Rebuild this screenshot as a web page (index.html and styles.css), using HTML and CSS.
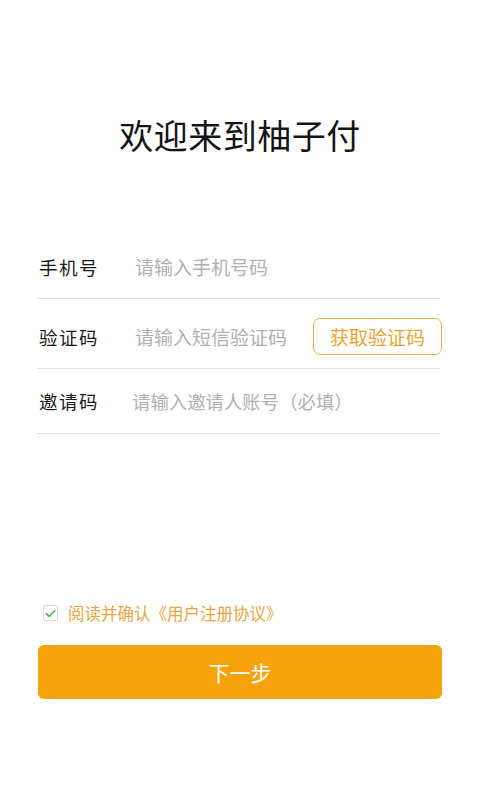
FILE: index.html
```html
<!DOCTYPE html>
<html lang="zh-CN">
<head>
<meta charset="utf-8">
<title>欢迎来到柚子付</title>
<link rel="stylesheet" href="styles.css">
</head>
<body>
<div class="page">
  <h1 class="title">欢迎来到柚子付</h1>
  <div class="form">
    <div class="row">
      <span class="label">手机号</span>
      <input class="field" type="text" placeholder="请输入手机号码">
    </div>
    <div class="row row-code">
      <span class="label">验证码</span>
      <input class="field" type="text" placeholder="请输入短信验证码">
      <button class="code-btn" type="button">获取验证码</button>
    </div>
    <div class="row">
      <span class="label">邀请码</span>
      <input class="field field-invite" type="text" placeholder="请输入邀请人账号（必填）">
    </div>
  </div>
  <label class="agree">
    <span class="check"><svg width="11" height="9" viewBox="0 0 11 9"><path d="M1.2 4.6 L4.2 7.4 L9.8 1.6" fill="none" stroke="#3cb04a" stroke-width="1.5" stroke-linecap="round" stroke-linejoin="round"/></svg></span>
    <span class="agree-text">阅读并确认《用户注册协议》</span>
  </label>
  <button class="next" type="button">下一步</button>
</div>
</body>
</html>
```

FILE: styles.css
```css
* { box-sizing: border-box; }
html, body { margin: 0; padding: 0; background: #fff; }
body {
  font-family: "Noto Sans CJK SC", "Noto Sans", sans-serif;
  color: #1a1a1a;
}
.page {
  width: 480px;
  height: 800px;
  padding: 115px 38px 0 37px;
  display: flex;
  flex-direction: column;
}
.title {
  margin: 0;
  font-size: 34px;
  font-weight: 400;
  line-height: 40px;
  text-align: center;
  letter-spacing: 0.5px;
  padding-left: 1px;
  color: #141414;
}
.form {
  margin-top: 80px;
  width: 403px;
  display: flex;
  flex-direction: column;
}
.row {
  height: 65px;
  display: flex;
  align-items: center;
  border-bottom: 1px solid #e3e3e3;
  padding-left: 2px;
}
.row:first-child { height: 64px; }
.row-code {
  height: 70px;
  padding-top: 18px;
  align-items: center;
}
.row-code > * { margin-bottom: 12px; }
.label {
  width: 96px;
  flex: none;
  font-size: 18.5px;
  letter-spacing: 1.5px;
  color: #1a1a1a;
  line-height: 26px;
}
.field {
  flex: 1;
  min-width: 0;
  border: 0;
  outline: none;
  padding: 0;
  background: transparent;
  font-family: "Noto Sans CJK SC", "Noto Sans", sans-serif;
  font-size: 19px;
  line-height: 26px;
  color: #333;
}
.field::placeholder { color: #b0b0b0; }
.field-invite { margin-left: -3px; font-size: 18.4px; }
.code-btn {
  flex: none;
  width: 129px;
  height: 37px;
  margin-right: -2px;
  border: 1.5px solid #eab04a;
  border-radius: 7px;
  background: #fff;
  color: #e9a431;
  font-family: "Noto Sans CJK SC", "Noto Sans", sans-serif;
  font-size: 19px;
  padding: 0;
  line-height: 34px;
}
.agree {
  margin-top: 169px;
  height: 20px;
  display: flex;
  align-items: center;
  padding-left: 6px;
}
.check {
  width: 15px;
  height: 16px;
  border: 1px solid #d8d8d8;
  border-radius: 2px;
  display: flex;
  align-items: center;
  justify-content: center;
  flex: none;
}
.agree-text {
  margin-left: 10px;
  font-size: 16.5px;
  color: #eaa443;
  line-height: 20px;
}
.next {
  margin-top: 22px;
  margin-left: 1px;
  width: 404px;
  height: 54px;
  border: 0;
  border-radius: 6px;
  background: #f5a20b;
  color: #fff;
  font-family: "Noto Sans CJK SC", "Noto Sans", sans-serif;
  font-size: 21px;
  padding: 0;
}
```
